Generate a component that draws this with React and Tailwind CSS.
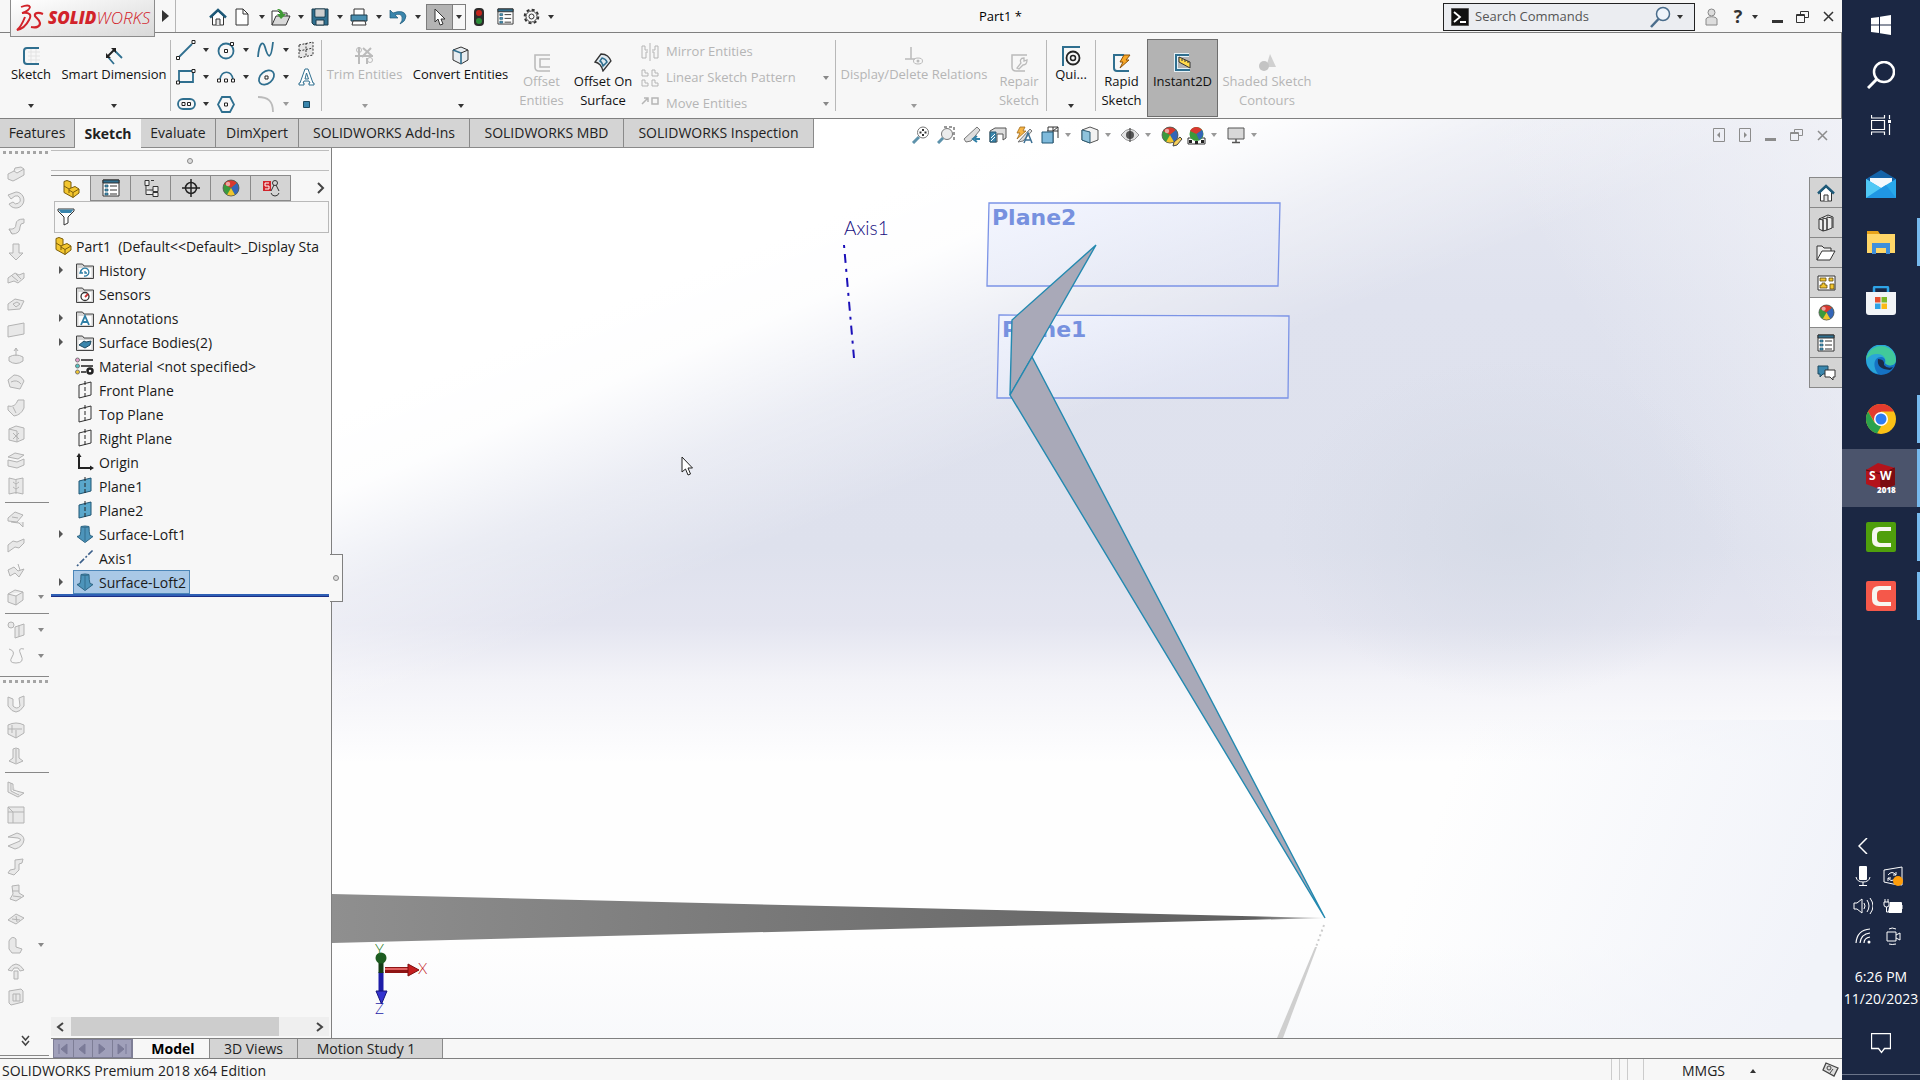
import React, { useState } from 'react';

const Svg = ({ w = 18, h, box, className = '', children }) => (
  <svg
    width={w}
    height={h || w}
    viewBox={box || `0 0 ${w} ${h || w}`}
    className={`shrink-0 ${className}`}
    fill="none"
    aria-hidden="true"
  >
    {children}
  </svg>
);

const Caret = ({ className = 'text-[#333]' }) => (
  <Svg w={6} h={4} className={className}>
    <path d="M0 0h6L3 4z" fill="currentColor" />
  </Svg>
);

const BLUE = '#2f6f8f';

const Ball = ({ size = 18 }) => (
  <Svg w={size} box="0 0 18 18">
    <circle cx="9" cy="9" r="8" fill="#3a9a3c" />
    <path d="M9 9L2 5a8 8 0 0 1 13-1z" fill="#d8382f" />
    <path d="M9 9l6-5a8 8 0 0 1-2 12z" fill="#3465b8" />
    <path d="M9 9l4 7a8 8 0 0 1-8 0z" fill="#f0c52e" />
    <circle cx="6" cy="5" r="2.2" fill="#fff" opacity=".55" />
    <circle cx="9" cy="9" r="8" stroke="#555" strokeWidth=".8" />
  </Svg>
);

const PartIcon = () => (
  <Svg w={18}>
    <path d="M2 6V1.500L5 .5l4 1.500v6l4-1.500L17 9v4l-6 4.500-9-5V6z" fill="#f3c62f" stroke="#7b5d0a" />
    <path d="M2 6l5 3v4m0-4l2-1m2 9.500v-5L17 9m-6 3.500L7 10" stroke="#7b5d0a" />
  </Svg>
);

const HomeIcon = () => (
  <Svg w={18}>
    <path d="M3.500 8v9h11V8L9 3z" fill="#fff" stroke="#333" />
    <path d="M1 9.500L9 2l8 7.500" stroke="#1e5978" strokeWidth="2.400" />
    <path d="M7 17v-6h4v6" fill="#e4e4e4" stroke="#333" />
  </Svg>
);

const PropertyIcon = ({ w = 18 }) => (
  <Svg w={w} box="0 0 18 18">
    <path d="M1 1h16v16H1z" fill="#fff" stroke="#333" />
    <path d="M1 1h16v3H1z" fill={BLUE} stroke="#333" />
    <path d="M3 6h3v2H3zM3 10h3v2H3zM3 14h3v2H3z" fill="#4a9cc0" stroke="#1d4e66" strokeWidth=".7" />
    <path d="M8 7h7M8 11h7M8 15h7" stroke="#333" />
  </Svg>
);

const RestoreIcon = ({ className }) => (
  <Svg w={13} h={12} className={className}>
    <path d="M4.500 3.500v-3h8v6h-4M.5 3.500h8v8h-8zM.5 4.500h8" stroke="currentColor" />
  </Svg>
);

const CloseIcon = ({ className }) => (
  <Svg w={11} className={className}>
    <path d="M1 1l9 9M10 1l-9 9" stroke="currentColor" strokeWidth="1.500" />
  </Svg>
);

const Logo = () => (
  <div className="z-10 ml-[10px] flex h-[37px] w-[145px] shrink-0 items-center border border-t-0 border-[#8c8c8c] bg-gradient-to-br from-white to-[#d9d9d9] pl-[5px]">
    <Svg w={28} h={28}>
      <path d="M5 3q8-3 9 0-1 4-8 6" stroke="#d2232a" strokeWidth="1.800" />
      <path d="M6 9c8-1 10 2 7 7-3 6-7 9-12 10 4-3 6-8 8-13" stroke="#d2232a" strokeWidth="2" />
      <path d="M27 10c-5-2-9-1-8 2 1 2 5 4 5 7 0 4-4 5-9 4" stroke="#d2232a" strokeWidth="2.200" />
    </Svg>
    <span className="ml-[4px] text-[17px] italic text-[#d2232a]">
      <b className="font-extrabold">SOLID</b>
      <span className="font-light">WORKS</span>
    </span>
  </div>
);

/* name, icon, whether a caret follows */
const quickTools = [
  ['New', <Svg w={16} h={18}><path d="M2 1h7l5 5v11H2z" fill="#fff" stroke="#333" /><path d="M9 1v5h5" stroke="#333" /></Svg>],
  ['Open', <Svg w={20} h={18}><path d="M1 17V3h6l2 2h7v4" fill="#fff" stroke="#333" /><path d="M1 17L5 8h14l-4 9z" fill="#d9d9d9" stroke="#333" /><path d="M6 1c4 0 6 2 6 5h3l-5 5-4-5h3c0-2-1-3-3-5z" fill="#3f9a35" /></Svg>],
  ['Save', <Svg w={18}><path d="M1 1h16v16H3l-2-2z" fill={BLUE} stroke="#1c3c4c" /><path d="M4 1h10v8H4z" fill="#fff" stroke="#1c3c4c" /><path d="M5 3h8M5 5h8M5 7h8" stroke="#777" strokeWidth=".7" /><path d="M5 12h8v5H5z" fill="#ddd" stroke="#1c3c4c" /></Svg>],
  ['Print', <Svg w={18}><path d="M4 7V1h10v6" fill="#fff" stroke="#333" /><path d="M1 7h16v6H1z" fill="#4a8fb0" stroke="#1c3c4c" /><path d="M3 13h12l1 4H2z" fill="#fff" stroke="#333" /></Svg>],
  ['Undo', <Svg w={18}><path d="M1 2v8h8L6 7q6-2 7 2 1 3-2 7 6-3 6-8Q15 1 4 5z" fill="#3a86ad" stroke="#1e5978" strokeWidth=".7" /></Svg>],
];

const TitleBar = () => (
  <header className="flex h-[33px] items-start border-b border-[#808080] bg-[#f7f7f7] text-[13px]">
    <Logo />
    <button aria-label="Show menu" className="flex h-[32px] w-[21px] items-center justify-center border-r border-[#b5b5b5]">
      <Svg w={7} h={12}><path d="M0 0l7 6-7 6z" fill="#333" /></Svg>
    </button>
    <div className="ml-[29px] flex h-[33px] items-center">
      <button aria-label="Home" className="flex h-[26px] w-[26px] items-center justify-center"><HomeIcon /></button>
      {quickTools.map(([name, icon]) => (
        <div key={name} className="flex h-[26px]">
          <button aria-label={name} className="flex w-[22px] items-center justify-center">{icon}</button>
          <button aria-label={`${name} options`} className="flex w-[17px] items-center justify-center"><Caret /></button>
        </div>
      ))}
      <div className="flex border border-[#7d7d7d]">
        <button aria-label="Select" className="flex h-[24px] w-[25px] items-center justify-center bg-[#b3b3b3]">
          <Svg w={12} h={18}><path d="M1 1v13l3-3 2 6 3-1-2-5h4z" fill="#fff" stroke="#333" /></Svg>
        </button>
        <button aria-label="Select options" className="flex w-[13px] items-center justify-center border-l border-[#7d7d7d]">
          <Caret />
        </button>
      </div>
      <button aria-label="Rebuild" className="flex w-[26px] justify-center">
        <Svg w={10} h={18}><rect width="10" height="18" rx="4" fill="#2c2c2c" /><circle cx="5" cy="5" r="3" fill="#c3241c" /><circle cx="5" cy="13" r="3" fill="#2c8c3a" /></Svg>
      </button>
      <button aria-label="File properties" className="flex w-[26px] justify-center"><PropertyIcon w={17} /></button>
      <button aria-label="Options" className="flex w-[26px] justify-center">
        <Svg w={17}>
          <circle cx="8.500" cy="8.500" r="6.800" stroke="#333" strokeWidth="2" strokeDasharray="3 2.340" />
          <circle cx="8.500" cy="8.500" r="5.500" stroke="#444" fill="#f7f7f7" />
          <circle cx="8.500" cy="8.500" r="2.500" stroke="#333" />
        </Svg>
      </button>
      <button aria-label="Options list" className="flex w-[14px] justify-center"><Caret /></button>
    </div>
    <h1 className="min-w-0 flex-1 self-center pt-[1px] text-center">Part1 *</h1>
    <div className="mt-[3px] flex h-[28px] w-[252px] shrink-0 items-center border border-[#222] bg-[#ebedf1] pl-[7px]">
      <Svg w={18}><path d="M.5.500h17v17H.5z" fill="#111" stroke="#555" /><path d="M3 4l6 5-6 5M9 14h6" stroke="#fff" strokeWidth="1.800" /></Svg>
      <input aria-label="Search Commands" placeholder="Search Commands" className="ml-[6px] w-[170px] bg-transparent outline-none placeholder:text-[#555]" />
      <Svg w={22} className="ml-[4px]"><circle cx="14" cy="8" r="6.500" fill="#eef4fb" stroke="#4a6d8c" strokeWidth="1.500" /><path d="M9.500 13L2 21" stroke="#4a6d8c" strokeWidth="2.500" /></Svg>
      <button aria-label="Search options" className="ml-[6px]"><Caret /></button>
    </div>
    <div className="flex h-[33px] shrink-0 items-center text-[#333]">
      <button aria-label="Sign in" className="ml-[9px] flex w-[14px] justify-center">
        <Svg w={13} h={18}><circle cx="6.500" cy="4.500" r="3.500" fill="#ddd" stroke="#888" /><path d="M1 17V11c1-3 10-3 11 0v6z" fill="#ddd" stroke="#888" /></Svg>
      </button>
      <button aria-label="Help" className="ml-[12px] w-[16px] text-[18px] font-bold">?</button>
      <button aria-label="Help options" className="ml-[6px] w-[8px]"><Caret /></button>
      <button aria-label="Minimize" className="ml-[12px] pt-[9px]"><span className="block h-[3px] w-[11px] bg-[#333]" /></button>
      <button aria-label="Restore" className="ml-[13px]"><RestoreIcon /></button>
      <button aria-label="Close" className="ml-[14px] mr-[8px]"><CloseIcon /></button>
    </div>
  </header>
);

const Divider = () => <div className="my-[7px] w-px shrink-0 bg-[#b8b8b8]" />;

const RibbonButton = ({ icon, lines, width, low, disabled, caret, className = '' }) => (
  <button
    disabled={disabled}
    className={`flex shrink-0 flex-col items-center leading-[19px] ${low ? 'pt-[20px]' : 'pt-[13px]'} ${width} ${disabled ? 'text-[#b5b5b5]' : 'text-[#111]'} ${className}`}
  >
    <span className="flex h-[19px] items-center">{icon}</span>
    {lines.map((l) => <span key={l} className="whitespace-nowrap">{l}</span>)}
    {caret && <span className="mt-[20px]"><Caret className={disabled ? 'text-[#999]' : 'text-[#333]'} /></span>}
  </button>
);

const node = (x, y) => <path key={`${x}-${y}`} d={`M${x} ${y}h3v3h-3z`} fill="#fff" stroke="#222" />;

const sketchTools = [
  ['Line', <Svg w={20}>{<path d="M3 17L16 4" stroke={BLUE} strokeWidth="1.800" />}{node(0.5, 16.5)}{node(16, 0.5)}</Svg>, true],
  ['Circle', <Svg w={19}><circle cx="9" cy="10" r="7.500" stroke={BLUE} strokeWidth="1.800" />{node(7.5, 8.5)}{node(13.5, 1.5)}</Svg>, true],
  ['Spline', <Svg w={18}><path d="M1 16C2 2 6-1 8 6c3 11 6 14 8-5" stroke={BLUE} strokeWidth="1.800" /></Svg>, true],
  ['Plane', <Svg w={16} h={18}><path d="M1 4l14-3v13L1 17zM8 2v14M1 10l14-3" stroke="#333" strokeDasharray="2 1.500" fill="#e6e6e6" /></Svg>, false],
  ['Rectangle', <Svg w={20} h={16}><path d="M3 2h14v11H3z" stroke={BLUE} strokeWidth="1.800" />{node(0.5, 12)}{node(16, 0.5)}</Svg>, true],
  ['Arc', <Svg w={19} h={14}><path d="M3 9C5 0 14 0 16 9" stroke={BLUE} strokeWidth="1.600" />{node(0.5, 9)}{node(7.5, 9)}{node(14.5, 9)}</Svg>, true],
  ['Ellipse', <Svg w={19}><ellipse cx="9.500" cy="9.500" rx="8.500" ry="6" transform="rotate(-40 9.500 9.500)" stroke={BLUE} strokeWidth="1.800" />{node(8, 8)}</Svg>, true],
  ['Text', <Svg w={17} h={18}><path d="M1 17h5v-2H5l1-2h5l1 2h-1v2h5v-2h-1L10 1H7L2 15H1zM7 11l1.500-6 2 6z" fill="#fff" stroke={BLUE} /></Svg>, false],
  ['Slot', <Svg w={19} h={12}><rect x="1" y="1" width="17" height="10" rx="5" stroke={BLUE} strokeWidth="1.800" />{node(5, 4.5)}{node(10.5, 4.5)}</Svg>, true],
  ['Polygon', <Svg w={18} h={17}><path d="M5 1h8l4 7.500L13 16H5L1 8.500z" stroke={BLUE} strokeWidth="1.800" />{node(7.5, 7)}</Svg>, false],
  ['Fillet', <Svg w={18}><path d="M1 2c10 0 15 4 15 15" stroke="#bbb" strokeWidth="1.800" /></Svg>, true],
  ['Point', <Svg w={7}><path d="M.5.500h6v6h-6z" fill="#3a86ad" stroke="#1e4a60" /></Svg>, false],
];

const sketchIcon = (
  <>
    <path d="M17 2H5q-3 0-3 3v10q0 3 3 3h12" stroke={BLUE} strokeWidth="2" />
    <path d="M6 6h12M6 10h12M6 14h12M9 3v14M14 3v14" stroke="#e3e3e3" />
  </>
);

const listTools = [
  ['Mirror Entities', <Svg w={18}><path d="M9 0v18M1 3v12h4V9h2M1 3h3v4h3M17 3v12h-4V9h-2M17 3h-3v4h-3" stroke="#b5b5b5" /></Svg>, false],
  ['Linear Sketch Pattern', <Svg w={18}><path d="M1 1v6h6V4H4V1zM11 1v6h6V4h-3V1zM1 11v6h6v-3H4v-3zM11 11v6h6v-3h-3v-3z" stroke="#b5b5b5" /></Svg>, true],
  ['Move Entities', <Svg w={18} h={16}><path d="M1 8l6-6M3 2h4v4M11 2h6v6h-6z" stroke="#b5b5b5" strokeWidth="1.500" /></Svg>, true],
];

const Ribbon = () => (
  <div className="flex h-[86px] overflow-hidden border-b border-r border-[#808080] bg-[#f7f7f7] pl-[4px] text-[13px]">
    <RibbonButton width="w-[54px]" lines={['Sketch']} caret icon={<Svg w={19}>{sketchIcon}</Svg>} />
    <RibbonButton
      width="w-[112px]"
      lines={['Smart Dimension']}
      caret
      icon={<Svg w={18}><path d="M9 3l8 8M3 10l6 7" stroke={BLUE} strokeWidth="1.800" /><path d="M3 9l6-6" stroke="#222" strokeWidth="2" /><path d="M1 11V6l5 5zM11 1v5L6 1z" fill="#222" /></Svg>}
    />
    <Divider />
    <div className="grid shrink-0 grid-cols-[40px_40px_40px_22px] grid-rows-3 content-center px-[4px] pt-[4px]">
      {sketchTools.map(([name, icon, caret], i) => (
        <div key={name} className="flex h-[26px] items-center">
          <button aria-label={name} className="flex w-[22px] justify-center">{icon}</button>
          {caret && <button aria-label={`${name} options`} className="flex w-[18px] justify-center"><Caret className={i === 10 ? 'text-[#999]' : 'text-[#333]'} /></button>}
        </div>
      ))}
    </div>
    <Divider />
    <RibbonButton
      width="w-[85px]" disabled caret lines={['Trim Entities']}
      icon={<Svg w={19}><path d="M4 1v17M0 10h18M8 2l9 8M16 2L7 11M12 12v6" stroke="#bbb" strokeWidth="2" /><circle cx="15" cy="14" r="2.500" stroke="#bbb" /><circle cx="4" cy="4" r="2.500" stroke="#bbb" /></Svg>}
    />
    <RibbonButton
      width="w-[107px]" caret lines={['Convert Entities']}
      icon={<Svg w={17} h={19}><path d="M1 4l8-3 7 3v10l-7 4-8-4z" fill="#e8edf1" stroke="#333" /><path d="M1 4l8 3v11" stroke={BLUE} strokeWidth="1.600" /><path d="M9 7l7-3" stroke="#333" /></Svg>}
    />
    <RibbonButton
      width="w-[55px]" low disabled lines={['Offset', 'Entities']}
      icon={<Svg w={18} h={19}><path d="M17 2H2v12q0 4 4 4h11M17 6H7v8h10" stroke="#bbb" strokeWidth="1.600" /></Svg>}
    />
    <RibbonButton
      width="w-[68px]" low lines={['Offset On', 'Surface']}
      icon={<Svg w={18} h={19}><path d="M7 1c6 0 8 3 10 7l-8 10Q7 10 1 9z" fill="#e1eaf0" stroke="#333" strokeWidth="1.300" /><path d="M8 5q4 1 5 4l-4 4Q8 9 6 8z" stroke={BLUE} strokeWidth="1.500" /></Svg>}
    />
    <div className="flex w-[198px] shrink-0 flex-col justify-center pl-[4px] pt-[4px] text-[#b5b5b5]">
      {listTools.map(([name, icon, caret]) => (
        <div key={name} className="flex h-[26px] items-center">
          <button disabled className="flex flex-1 items-center gap-[7px]">{icon}{name}</button>
          {caret && <button disabled aria-label={`${name} options`} className="mr-[6px]"><Caret className="text-[#888]" /></button>}
        </div>
      ))}
    </div>
    <Divider />
    <RibbonButton
      width="w-[156px]" disabled caret lines={['Display/Delete Relations']}
      icon={<Svg w={18} h={19}><path d="M6 1v12M0 13h10" stroke="#bbb" strokeWidth="1.500" /><ellipse cx="13" cy="15" rx="4.500" ry="3" stroke="#bbb" /><circle cx="13" cy="15" r="1.500" fill="#bbb" /></Svg>}
    />
    <RibbonButton
      width="w-[54px]" low disabled lines={['Repair', 'Sketch']}
      icon={<Svg w={18} h={19}><path d="M17 2H2v12q0 4 4 4h9" stroke="#bbb" strokeWidth="1.500" /><path d="M14 5c-4 0-4 3-3 5l-4 5 2 1 4-4c3 0 4-2 4-5l-3 1z" stroke="#bbb" strokeWidth="1.300" /></Svg>}
    />
    <Divider />
    <RibbonButton
      width="w-[48px]" caret lines={['Qui...']}
      icon={<Svg w={19} h={20}><path d="M1 20V1h17" stroke={BLUE} strokeWidth="2" /><circle cx="11" cy="12" r="6.500" stroke="#222" strokeWidth="1.800" /><circle cx="11" cy="12" r="2.500" stroke="#222" strokeWidth="1.500" /></Svg>}
    />
    <Divider />
    <RibbonButton
      width="w-[51px]" low lines={['Rapid', 'Sketch']}
      icon={<Svg w={19}><path d="M12 2H2v13q0 3 3 3h12" stroke={BLUE} strokeWidth="2" /><path d="M12 2h6l-4 5h3l-9 8 3-6H8z" fill="#f9a826" stroke="#8d5208" /></Svg>}
    />
    <RibbonButton
      width="w-[71px]" low lines={['Instant2D']}
      className="mb-[1px] mt-[6px] border border-[#6e6e6e] bg-[#b3b3b3] !pt-[13px]"
      icon={<Svg w={19}><path d="M16 2H3v15h14" stroke="#e4f1f7" strokeWidth="4" /><path d="M16 2H3v15h14" stroke={BLUE} strokeWidth="2" /><path d="M6 4l11 5v6L6 9z" fill="#ffd94a" stroke="#333" /><path d="M9 6v2M12 7v2M15 8v2" stroke="#333" /></Svg>}
    />
    <RibbonButton
      width="w-[98px]" low disabled lines={['Shaded Sketch', 'Contours']}
      icon={<Svg w={19}><path d="M12 1l6 13H8z" fill="#d0d0d0" /><circle cx="6" cy="13" r="5" fill="#c4c4c4" /></Svg>}
    />
  </div>
);

const commandTabs = [
  ['Features', 'w-[75px]'],
  ['Sketch', 'w-[66px]'],
  ['Evaluate', 'w-[75px]'],
  ['DimXpert', 'w-[83px]'],
  ['SOLIDWORKS Add-Ins', 'w-[171px]'],
  ['SOLIDWORKS MBD', 'w-[154px]'],
  ['SOLIDWORKS Inspection', 'w-[190px]'],
];

const CommandTabs = ({ active, onSelect }) => (
  <nav className="flex text-[14px] text-[#222]">
    {commandTabs.map(([name, width]) => (
      <button
        key={name}
        onClick={() => onSelect(name)}
        className={`h-[29px] shrink-0 whitespace-nowrap pb-[1px] ${width} ${
          name === active ? 'bg-[#f7f7f7] font-bold' : 'border-b border-r border-[#8a8a8a] bg-[#d4d4d4]'
        }`}
      >
        {name}
      </button>
    ))}
  </nav>
);

const viewTools = [
  ['Zoom to Fit', <Svg w={18}><circle cx="12" cy="6.500" r="5.500" fill="#fff" stroke="#777" /><path d="M12 3v7M8.500 6.500h7" stroke="#333" strokeDasharray="2 3" strokeWidth="2" /><path d="M8 11l-6 6" stroke="#5d92ab" strokeWidth="3" /></Svg>, false],
  ['Zoom to Area', <Svg w={18}><path d="M7 1h10v13" stroke="#333" strokeDasharray="3 2" /><circle cx="10" cy="8" r="5.500" fill="#ececec" stroke="#777" /><path d="M6 12l-5 5" stroke="#5d92ab" strokeWidth="3" /></Svg>, false],
  ['Previous View', <Svg w={18}><path d="M14 1l3 3-9 11-5 1-2-3z" fill="#ddd" stroke="#777" /><path d="M17 13h-5m2-3l-4 3 4 3" stroke="#2f7fa6" strokeWidth="2" /></Svg>, false],
  ['Section View', <Svg w={18}><path d="M1 5l5-3h11v10l-3 2V8H8v8H1z" fill="#ddd" stroke="#555" /><path d="M1 6h6v10H1z" fill="#3b87ad" stroke="#2c5b73" /><path d="M2 12l4-4M2 15l4-4" stroke="#fff" /></Svg>, false],
  ['Dynamic Annotation', <Svg w={18}><path d="M10 1H5L2 7h3l-3 6 9-8H8z" fill="#f6b445" stroke="#a06a1c" strokeWidth=".8" /><path d="M15 3l2 2-9 10-5 1z" fill="#ddd" stroke="#777" /><path d="M9 17l4-10 4 10M10 14h6" stroke="#3b6f93" strokeWidth="1.500" /></Svg>, false],
  ['View Orientation', <Svg w={18}><path d="M7 1h10v11M7 1v4M12 1v16M17 1l-5 4M6 5h11" stroke="#333" /><path d="M1 6h11v11H1z" fill="#7fbadb" stroke="#1f5573" /></Svg>, true],
  ['Display Style', <Svg w={18}><path d="M1 4l8-3 8 3v10l-8 3-8-3z" fill="#f2f2f2" stroke="#555" /><path d="M1 4l8 2v11l-8-3z" fill="#8fc3dc" stroke="#2c5b73" /></Svg>, true],
  ['Hide/Show Items', <Svg w={18} h={14}><path d="M0 7q9-12 18 0-9 12-18 0z" fill="#e3e3e3" stroke="#999" /><circle cx="9" cy="7" r="4" fill="#555" /><path d="M9 0v14" stroke="#333" /></Svg>, true],
  ['Edit Appearance', <span className="relative"><Ball /><Svg w={12} className="absolute -bottom-1 -right-1"><path d="M2 10l1-4 6-5 2 2-5 6z" fill="#f6cf5a" stroke="#444" /></Svg></span>, false],
  ['Apply Scene', <Svg w={19}><path d="M1 12h17v6H1z" fill="#fff" stroke="#333" /><path d="M2 14h3v3H2zM14 14h3v3h-3zM8 15h3v3H8z" fill="#222" /><circle cx="9.500" cy="8" r="7" fill="#3a9a3c" /><path d="M9.500 8L3 5a7 7 0 0 1 12-1z" fill="#d8382f" /><path d="M9.500 8L15 4a7 7 0 0 1-3 10z" fill="#3465b8" /></Svg>, true],
  ['View Settings', <Svg w={18}><path d="M1 2h16v11H1z" fill="#d8d8d8" stroke="#555" /><path d="M9 13v3M5 16.500h8" stroke="#555" strokeWidth="1.500" /></Svg>, true],
];

const ViewBar = () => (
  <div className="flex min-w-0 flex-1 items-center justify-between pt-[3px]">
    <div className="ml-[95px] flex items-center gap-[4px]">
      {viewTools.map(([name, icon, caret]) => (
        <div key={name} className="flex items-center">
          <button aria-label={name} className="flex w-[22px] justify-center">{icon}</button>
          {caret && <button aria-label={`${name} options`} className="flex w-[14px] justify-center"><Caret className="text-[#999]" /></button>}
        </div>
      ))}
    </div>
    <div className="mr-[14px] flex items-center gap-[14px] text-[#8c8c8c]">
      <button aria-label="Collapse left"><Svg w={12} h={14}><path d="M.5.500h11v13H.5z" stroke="currentColor" /><path d="M7 4v6L4 7z" fill="currentColor" /></Svg></button>
      <button aria-label="Collapse right"><Svg w={12} h={14}><path d="M.5.500h11v13H.5z" stroke="currentColor" /><path d="M5 4v6l3-3z" fill="currentColor" /></Svg></button>
      <button aria-label="Minimize document" className="pt-[8px]"><span className="block h-[3px] w-[11px] bg-[#8c8c8c]" /></button>
      <button aria-label="Restore document"><RestoreIcon /></button>
      <button aria-label="Close document"><CloseIcon /></button>
    </div>
  </div>
);

/* surface, weldment and sheet metal commands, top to bottom */
const sideGroups = [
  {
    names: ['Extruded', 'Revolved', 'Swept', 'Lofted', 'Boundary', 'Filled', 'Planar', 'Offset', 'Ruled', 'Flatten', 'Delete Face', 'Replace Face', 'Knit'],
    shapes: [
      'M1 9l6-3 3 2 7-4v6l-7 4-4 2-5-2zM7 6l1-3 6-1 3 2',
      'M9 1a8 8 0 1 1-7 12l4-2a4 4 0 1 0 2-6L4 8 1 4z',
      'M2 12q7 1 7-5 0-5 8-5v4q-4 0-4 4 0 7-8 7zM2 12l3 5',
      'M6 1h6v9h4l-7 7-7-7h4z',
      'M1 9l7-5 4 2 5-2v5l-6 5-4-2-6 2zM5 7l6 5M9 5l5 5',
      'M1 9l7-5 9 2-4 8-12 1zM6 9l4-2 3 2-4 3z',
      'M1 5l16-3v11L1 16z',
      'M2 10q7-4 14 0v4q-7 5-14 0zM9 9V1M7 4l2-3 2 3',
      'M1 7l6-5q7 0 10 6l-4 8-10-2zM4 9q6-3 10 2',
      'M11 1h6v8q-3 7-10 8l-6-6v-4q7 2 10-6zM6 8l3 6',
      'M2 4l7-3 8 2v11l-7 3-8-2zM2 4l8 2v11M6 8l6 6M12 8l-6 6',
      'M1 6l7-4 9 2-6 4zM1 9l9 2 7-3v6l-7 3-9-2z',
      'M2 1q6 3 14 0v16q-7-3-14 0zM9 2v15M6 5l3 2 3-2M6 10l3 2 3-2',
    ],
  },
  {
    names: ['Extend', 'Trim', 'Untrim', 'Thicken'],
    shapes: [
      'M1 8l7-6 8 3-6 7-9-1zM4 12l8 1 4 4v-5M5 7l6 1',
      'M1 9l5-4 4 1 7-3v4l-5 5-4-1-7 5z',
      'M1 8l6-3 4 4 6-2-5 8-4-4-5 3zM11 2l2 6',
      'M1 6l7-4 8 2v8l-7 5-8-3zM1 6l8 2 7-4M9 8v9',
    ],
    carets: [3],
  },
  {
    names: ['Reference Geometry', 'Curves'],
    shapes: ['M8 6l9-3v11l-9 3zM12 4v12M1 4a3 3 0 1 0 6 0a3 3 0 1 0-6 0', 'M2 2q7 2 3 8t4 6q9 0 5-8t3-6'],
    carets: [0, 1],
    gripAfter: true,
  },
  {
    names: ['Base Flange', 'Convert to Sheet Metal', 'Lofted Bend'],
    shapes: [
      'M1 2l5 2v7q4 4 7 0l-1-8 5-2v10q-8 12-16 0z',
      'M1 4q8-4 16 0v8l-8 5-8-4zM1 8h14M5 4v8M9 9v8',
      'M6 2q3-2 6 0v9l4 3-7 3-7-3 4-3zM9 2v14',
    ],
  },
  {
    names: ['Edge Flange', 'Miter Flange', 'Hem', 'Jog', 'Sketched Bend', 'Cross-Break', 'Corners', 'Forming Tool', 'Vent'],
    shapes: [
      'M1 2l5 2v6l11 3-6 4-10-5zM4 3v8l8 4',
      'M1 1h16v16H1zM1 6h16M6 6v11M1 1l5 5',
      'M1 5l9-4q7 2 7 7-1 7-9 9l-7-3 12-5q2-2-2-3z',
      'M8 2l8-1-1 4-3 1v6l-5 5-6-2 2-3 5-1z',
      'M5 2l7-1v8l5 3-8 5-6-2 3-5zM5 7h7M6 12l8 1',
      'M1 10l8-6 8 4-8 6zM5 9l8 1M9 6l1 6',
      'M2 5q3-6 7-2v8l6 2-2 4H5l-3-4z',
      'M1 8q8-12 16 0l-4 1-2-3H7L5 9zM7 9h4v8H7z',
      'M2 3l12-2 2 2v11l-12 3-2-2zM6 6h7v7H6zM9 6v7',
    ],
    carets: [6],
  },
];

const Grip = () => <div className="mx-[3px] h-[3px] border-b-[3px] border-dotted border-[#a5a5a5]" />;

const SideToolbar = () => (
  <aside className="flex w-[51px] shrink-0 flex-col bg-[#f7f7f7] pt-[3px]">
    <Grip />
    <div className="h-[7px]" />
    {sideGroups.map((group, g) => (
      <div key={g}>
        {group.names.map((name, i) => (
          <div key={name} className="flex h-[26px] items-center pl-[5px]">
            <button aria-label={name} className="flex w-[22px] justify-center">
              <Svg w={18}>
                <path d={group.shapes[i]} fill={name === 'Curves' ? 'none' : '#e8e8e8'} stroke="#b3b3b3" strokeLinejoin="round" />
              </Svg>
            </button>
            {group.carets?.includes(i) && (
              <button aria-label={`${name} options`} className="ml-[11px]"><Caret className="text-[#888]" /></button>
            )}
          </div>
        ))}
        {group.gripAfter ? (
          <div className="h-[22px] pt-[7px]">
            <div className="mr-[2px] border-t border-[#888]" />
            <div className="h-[3px]" />
            <Grip />
          </div>
        ) : g < 4 && <div className="flex h-[7px] items-center"><div className="ml-[5px] mr-[2px] h-px flex-1 bg-[#888]" /></div>}
      </div>
    ))}
    <div className="flex flex-1 items-end pb-[8px] pl-[20px]">
      <button aria-label="More tools"><Svg w={11} h={12}><path d="M2 1l3.500 4L9 1M2 6l3.500 4L9 6" stroke="#444" strokeWidth="1.500" /></Svg></button>
    </div>
    <div className="mr-[2px] border-t border-[#888] pb-[2px]" />
  </aside>
);

const Folder = ({ children }) => (
  <Svg w={18} h={17}>
    <path d="M.5 2h6l1.500 2h9.500v12.500H.5z" fill="#d6d6d6" stroke="#444" />
    <path d="M2.500 6h13v9h-13z" fill="#fff" />
    {children}
  </Svg>
);

const PlaneIcon = ({ solid }) => (
  <Svg w={16} h={18}>
    <path d="M2 4l12-3v13L2 17z" fill={solid ? '#5aa7cb' : 'none'} stroke={solid ? '#1f5573' : '#333'} />
    <path d="M8 0v18" stroke="#222" strokeDasharray="4 2" />
  </Svg>
);

const LoftIcon = () => (
  <Svg w={18}>
    <path d="M5 1.500q4-1 8 0 0 6 1 9l3 1-8 6-8-6 3-1q1-3 1-9z" fill="#4d94ba" stroke="#2c6483" />
    <path d="M9 3v13M5 2q4 1 8 0" stroke="#356f8f" />
  </Svg>
);

const tree = [
  { label: 'History', open: true, icon: <Folder><path d="M5 8l-1 3h3M5 11a4 4 0 1 1 3 3M9 9v2h2" stroke="#2f7fa6" strokeWidth="1.300" /></Folder> },
  { label: 'Sensors', icon: <Folder><circle cx="9" cy="10.500" r="4" stroke="#333" strokeWidth="1.300" /><path d="M9 11l3-3" stroke="#c33" strokeWidth="1.800" /></Folder> },
  { label: 'Annotations', open: true, icon: <Folder><path d="M5 15L9 6l4 9M6.500 12h5" stroke="#2f7fa6" strokeWidth="1.800" /></Folder> },
  { label: 'Surface Bodies(2)', open: true, icon: <Folder><path d="M3 11l5-4 2 1 5-1-1 4-5 3-2-1z" fill="#3a86ad" stroke="#1e4a60" /></Folder> },
  { label: 'Material <not specified>', icon: <Svg w={19} h={18}><circle cx="2.500" cy="3" r="2" fill="#e8a0d0" stroke="#777" /><circle cx="2.500" cy="9" r="2" fill="#4fc3c3" stroke="#777" /><circle cx="2.500" cy="15" r="2" fill="#f0c52e" stroke="#777" /><path d="M6 3h12M6 9h12M6 15h5" stroke="#222" strokeWidth="1.600" /><circle cx="15" cy="14" r="2.500" stroke="#222" strokeWidth="2.500" /></Svg> },
  { label: 'Front Plane', icon: <PlaneIcon /> },
  { label: 'Top Plane', icon: <PlaneIcon /> },
  { label: 'Right Plane', icon: <PlaneIcon /> },
  { label: 'Origin', icon: <Svg w={18}><path d="M3 2v13h13" stroke="#222" strokeWidth="2" /><path d="M3 0l2.500 4h-5zM18 15l-4-2.500v5z" fill="#222" /></Svg> },
  { label: 'Plane1', icon: <PlaneIcon solid /> },
  { label: 'Plane2', icon: <PlaneIcon solid /> },
  { label: 'Surface-Loft1', open: true, icon: <LoftIcon /> },
  { label: 'Axis1', icon: <Svg w={18}><path d="M1 17L17 1" stroke="#3b5f8a" strokeWidth="1.600" strokeDasharray="2 2 6 2" /></Svg> },
  { label: 'Surface-Loft2', open: true, icon: <LoftIcon /> },
];

const managerTabs = [
  ['FeatureManager', <PartIcon />],
  ['PropertyManager', <PropertyIcon />],
  ['ConfigurationManager', <Svg w={18}><path d="M3 1.500h4v5H3zM4 6.500v9h7M4.500 11H11M11 7.500h5v5h-5zM11 13.500h5v4h-5zM9 1.500h3" stroke="#333" fill="#eee" /></Svg>],
  ['DimXpertManager', <Svg w={18}><circle cx="9" cy="9" r="5.500" stroke="#222" strokeWidth="1.500" /><path d="M9 0v18M0 9h18" stroke="#222" strokeWidth="1.500" /></Svg>],
  ['DisplayManager', <Ball />],
  ['Inspection', <Svg w={18}><path d="M1 2h8v10H1z" fill="#d2232a" /><path d="M7 4H3v3h4v3H3" stroke="#fff" /><circle cx="13" cy="4" r="2.500" stroke="#333" /><path d="M12 6l-3 6M14 6l3 6M9 14q1 3 4 3t4-3" stroke="#333" /></Svg>],
];

const FeaturePanel = () => {
  const [selected, setSelected] = useState('Surface-Loft2');

  return (
    <section className="relative flex w-[281px] shrink-0 flex-col border-r border-[#808080] bg-[#f7f7f7] pr-[2px]">
      <div className="mt-[2px] flex h-[21px] items-center justify-center border-y border-[#bdbdbd]">
        <span className="h-[6px] w-[6px] rounded-full border border-[#888] bg-[#ddd]" />
      </div>
      <div className="mt-[4px] flex h-[26px]">
        {managerTabs.map(([name, icon], i) => (
          <button
            key={name}
            aria-label={name}
            className={`flex w-[40px] items-center justify-center border-t border-r border-[#8a8a8a] ${i === 0 ? '' : 'border-b bg-[#d4d4d4]'}`}
          >
            {icon}
          </button>
        ))}
        <button aria-label="More managers" className="ml-[26px]"><Svg w={8} h={12}><path d="M1 1l5 5-5 5" stroke="#444" strokeWidth="2" /></Svg></button>
      </div>
      <label className="ml-[3px] flex h-[32px] items-center border border-[#b9b9b9] pl-[2px]">
        <Svg w={18}><path d="M1 1h16v2l-6 6v6l-4 2V9L1 3z" fill="#fff" stroke="#333" /><path d="M1.500 1.500h15L14 5H4z" fill="#3a86ad" /></Svg>
        <input aria-label="Filter" className="min-w-0 flex-1 bg-transparent outline-none" />
      </label>
      <div className="mt-px flex-1 text-[14px] text-[#1a1a1a]">
        <div className="flex h-[24px] items-center gap-[4px] overflow-hidden whitespace-nowrap pl-[3px]">
          <PartIcon />
          <span>Part1&nbsp; (Default&lt;&lt;Default&gt;_Display Sta</span>
        </div>
        <ul>
          {tree.map(({ label, open, icon }) => (
            <li key={label} className="flex h-[24px] items-center pl-[8px]">
              {open
                ? <button aria-label={`Expand ${label}`} className="w-[14px]"><Svg w={4} h={8}><path d="M0 0l4 4-4 4z" fill="#555" /></Svg></button>
                : <span className="w-[14px]" />}
              <button
                onClick={() => setSelected(label)}
                className={`flex h-[24px] items-center gap-[5px] whitespace-nowrap border pl-px pr-[3px] ${selected === label ? 'border-[#4c86b8] bg-[#a9c8e6]' : 'border-transparent'}`}
              >
                <span className="flex w-[19px] justify-center">{icon}</span>
                {label}
              </button>
            </li>
          ))}
        </ul>
        <div className="h-[3px] border-b border-[#1c2f86] bg-[#2f5fb5]" />
      </div>
      <div className="mb-[2px] flex h-[19px] items-center bg-[#efefef] px-[5px]">
        <button aria-label="Scroll left"><Svg w={8} h={10}><path d="M7 1L2 5l5 4" stroke="#444" strokeWidth="2" /></Svg></button>
        <div className="ml-[7px] h-[19px] w-[208px] bg-[#cdcdcd]" />
        <button aria-label="Scroll right" className="ml-auto"><Svg w={8} h={10}><path d="M1 1l5 4-5 4" stroke="#444" strokeWidth="2" /></Svg></button>
      </div>
      <button
        aria-label="Collapse panel"
        className="absolute -right-[12px] top-[406px] flex h-[48px] w-[13px] items-center justify-center border border-l-0 border-[#808080] bg-[#f7f7f7]"
      >
        <span className="h-[6px] w-[6px] rounded-full border border-[#888] bg-[#ddd]" />
      </button>
    </section>
  );
};

/* model space; the scene sits at window coordinates, shifted up by the header height */
const Scene = () => (
  <svg className="absolute inset-0 h-full w-full" aria-label="Model view">
    <defs>
      <linearGradient id="sky" gradientUnits="userSpaceOnUse" x1="0" y1="0" x2="0" y2="919">
        <stop offset="0" stopColor="#e6e8f1" />
        <stop offset=".2" stopColor="#dfe2ee" />
        <stop offset=".47" stopColor="#dee1ed" />
        <stop offset=".55" stopColor="#e4e5f0" />
        <stop offset=".61" stopColor="#f3f3f8" />
        <stop offset=".7" stopColor="#fefefe" />
        <stop offset=".9" stopColor="#fefefe" />
        <stop offset="1" stopColor="#f8f9fb" />
      </linearGradient>
      <linearGradient id="glow" gradientUnits="userSpaceOnUse" x1="650" y1="170" x2="755" y2="430">
        <stop offset="0" stopColor="#fff" />
        <stop offset=".25" stopColor="#fff" stopOpacity=".95" />
        <stop offset=".6" stopColor="#fff" stopOpacity=".4" />
        <stop offset="1" stopColor="#fff" stopOpacity="0" />
      </linearGradient>
      <linearGradient id="corner" gradientUnits="userSpaceOnUse" x1="1420" y1="740" x2="1800" y2="880">
        <stop offset="0" stopColor="#f1f3f9" stopOpacity="0" />
        <stop offset="1" stopColor="#f1f3f9" />
      </linearGradient>
      <linearGradient id="edge" gradientUnits="userSpaceOnUse" x1="1560" y1="160" x2="1842" y2="0">
        <stop offset="0" stopColor="#f2f3f8" stopOpacity="0" />
        <stop offset="1" stopColor="#f2f3f8" stopOpacity=".8" />
      </linearGradient>
      <radialGradient id="shade">
        <stop offset="0" stopColor="#d4d9e5" stopOpacity=".8" />
        <stop offset="1" stopColor="#d4d9e5" stopOpacity="0" />
      </radialGradient>
      <linearGradient id="blade" x1="0" x2="1" y1="0" y2="0">
        <stop offset="0" stopColor="#8f8f8f" />
        <stop offset=".75" stopColor="#696969" />
        <stop offset=".93" stopColor="#5f5f5f" />
        <stop offset="1" stopColor="#d0d0d0" />
      </linearGradient>
      <linearGradient id="face" x1="0" x2="1" y1="0" y2="1">
        <stop offset="0" stopColor="#f1f4ff" stopOpacity=".9" />
        <stop offset="1" stopColor="#dfe3f2" stopOpacity=".5" />
      </linearGradient>
    </defs>
    <rect width="100%" height="100%" fill="url(#sky)" />
    <rect width="100%" height="100%" fill="url(#glow)" />
    <rect width="100%" height="55%" fill="url(#edge)" />
    <rect y="64%" width="100%" height="36%" fill="url(#corner)" />
    <ellipse cx="1510" cy="410" rx="230" ry="170" fill="url(#shade)" />
    <g transform="translate(0 -119)">
      <path d="M989 203h291l-2 83H987z" fill="url(#face)" stroke="#7b93e6" strokeWidth="1.300" />
      <path d="M999 315l290 1-1 82H997z" fill="url(#face)" stroke="#7b93e6" strokeWidth="1.300" />
      <g fill="#7791df" fontFamily="DejaVu Sans, sans-serif" fontWeight="700" fontSize="22">
        <text x="992" y="225">Plane2</text>
        <text x="1002" y="337">Plane1</text>
      </g>
      <path d="M1096 245l-84 75-2 75 22-38z" fill="#a9a9b8" stroke="#2389b0" strokeWidth="1.400" />
      <path d="M1010 395l22-38 293 561z" fill="#a9a9b8" stroke="#2389b0" strokeWidth="1.400" />
      <path d="M332 894l993 24-993 25z" fill="url(#blade)" />
      <path d="M1324 925l-8 22" stroke="#ccc" strokeWidth="2" strokeDasharray="2 3" />
      <path d="M1315 947l2 0-34 91h-6z" fill="#cfcfcf" />
      <text x="844" y="235" fill="#140c80" fontFamily="Lato, sans-serif" fontWeight="300" fontSize="19">Axis1</text>
      <path d="M844 245l10 113" stroke="#1b10b8" strokeWidth="2" strokeDasharray="3 6 9 6" />
      <g fontFamily="Lato, sans-serif" fontWeight="300" fontSize="15">
        <path d="M381 972v20" stroke="#1d1da8" strokeWidth="5" />
        <path d="M376 991h11l-5.500 13z" fill="#3434d0" stroke="#15157a" />
        <path d="M381 958v15" stroke="#143c16" strokeWidth="5" />
        <circle cx="381" cy="958" r="5.500" fill="#1d5c20" />
        <path d="M385 970h24" stroke="#8e1414" strokeWidth="6" />
        <path d="M385 969h24" stroke="#e06060" strokeWidth="2" />
        <path d="M408 964l11 6-11 6z" fill="#c41f1f" stroke="#7d1010" />
        <text x="375" y="955" fill="#1d7a20">Y</text>
        <text x="418" y="974" fill="#c41f1f">X</text>
        <text x="375" y="1014" fill="#1d1da8">Z</text>
      </g>
      <path d="M682 457v15l3.500-3 2.500 6 2.500-1-2.500-6h4.500z" fill="#fff" stroke="#222" />
    </g>
  </svg>
);

const taskPane = [
  ['Resources', <HomeIcon />],
  ['Design Library', <Svg w={18}><path d="M2 5l4 1v11l-4-2zM6 4l4 1v11l-4 1zM10 3l5 1v10l-5 2zM2 5l9-4 5 2v11" stroke="#333" fill="#eee" /></Svg>],
  ['File Explorer', <Svg w={20} h={17}><path d="M1 16V2h5l2 2h7v3" stroke="#333" fill="#eee" /><path d="M1 16L6 7h13l-5 9z" stroke="#333" fill="#fff" /></Svg>],
  ['View Palette', <Svg w={19} h={16}><path d="M1 1h17v14H1z" fill="#fff" stroke="#333" /><path d="M3 3h6v3H3zM12 3h4v3h-4zM5 8h3v2h2v3H3v-3h2zM13 9h4v5h-4z" fill="#f3c62f" stroke="#5d4a10" strokeWidth=".8" /></Svg>],
  ['Appearances', <Ball size={17} />],
  ['Custom Properties', <PropertyIcon />],
  ['Forum', <Svg w={19} h={16}><path d="M1 1h10v8H6l-3 3V9H1z" fill="#3a86ad" stroke="#1e4a60" /><path d="M8 5h10v7h-2v3l-3-3H8z" fill="#fff" stroke="#333" /></Svg>],
];

const TaskPane = () => {
  const [open, setOpen] = useState('Appearances');

  return (
    <div className="z-10 mt-[29px] flex flex-col self-start border-l border-t border-[#888]">
      {taskPane.map(([name, icon]) => (
        <button
          key={name}
          aria-label={name}
          onClick={() => setOpen(name)}
          className={`flex h-[30px] w-[32px] items-center justify-center border-b border-[#888] ${open === name ? 'bg-white' : 'bg-[#d4d4d4]'}`}
        >
          {icon}
        </button>
      ))}
    </div>
  );
};

const playShapes = ['M3 2v10M11 2v10L5 7z', 'M9 2v10L3 7z', 'M4 2v10l6-5z', 'M3 2v10l6-5zM11 2v10'];

const MotionTabs = () => (
  <div className="z-10 flex h-[20px] border-t border-[#808080] bg-[#f7f7f7] text-[14px] text-[#222]">
    <div className="ml-[2px] flex w-[80px] border border-[#7e7e96] bg-[#a0a0ba]">
      {playShapes.map((d, i) => (
        <button key={d} aria-label={['First tab', 'Previous tab', 'Next tab', 'Last tab'][i]} className="flex flex-1 items-center justify-center border-r border-[#7e7e96]">
          <Svg w={14}><path d={d} fill="#7b7b98" stroke="#7b7b98" /></Svg>
        </button>
      ))}
    </div>
    <button className="w-[76px] pl-[4px] font-bold leading-[19px] text-black">Model</button>
    <button className="w-[89px] border-x border-[#8a8a8a] bg-[#d4d4d4] leading-[19px]">3D Views</button>
    <button className="w-[145px] border-r border-[#8a8a8a] bg-[#d4d4d4] pr-[8px] leading-[19px]">Motion Study 1</button>
  </div>
);

const StatusBar = () => (
  <footer className="flex h-[22px] items-center border-t border-[#808080] bg-[#f7f7f7] text-[14px] text-[#222]">
    <span className="flex-1 pl-[2px] pt-[2px]">SOLIDWORKS Premium 2018 x64 Edition</span>
    <div className="flex h-full gap-[7px]">
      <span className="w-px bg-[#ccc]" />
      <span className="w-px bg-[#ccc]" />
      <span className="w-px bg-[#ccc]" />
      <span className="ml-[8px] w-px bg-[#ccc]" />
    </div>
    <button className="ml-[38px] flex items-center pt-[2px] text-[14px]">
      MMGS
      <Svg w={6} h={4} className="ml-[25px]"><path d="M0 4h6L3 0z" fill="#333" /></Svg>
    </button>
    <button aria-label="Tags" className="ml-[66px] mr-[3px]">
      <Svg w={17} h={15}><path d="M4 1l12 5-4 8L1 8z" fill="#ddd" stroke="#444" strokeWidth="1.300" /><circle cx="7" cy="6" r="2" stroke="#444" /><path d="M11 7l-3 4" stroke="#444" /></Svg>
    </button>
  </footer>
);

const camtasia = (color) => (
  <Svg w={30}>
    <rect width="30" height="30" rx="2" fill={color} />
    <path d="M25 5H13q-7 0-7 7v6q0 7 7 7h12v-4l-10 0q-4 0-4-4v-4q0-4 4-4l10 0z" fill="#f6f6f0" />
  </Svg>
);

/* name, icon, cell size, running, focused */
const apps = [
  ['Start', <Svg w={20}><path d="M0 3l8-1v7.500H0zM9 1.800L20 0v9.500H9zM0 10.500h8V18l-8-1zM9 10.500h11V20L9 18.200z" fill="#fff" /></Svg>, 'h-[50px]'],
  ['Search', <Svg w={28}><circle cx="17" cy="11" r="10" stroke="#fff" strokeWidth="2.500" /><path d="M10 18l-9 9" stroke="#fff" strokeWidth="3" /></Svg>, 'h-[50px]'],
  ['Task View', <Svg w={20}><path d="M.5 0v3h13V0M.5 5.500h13v9H.5zM.5 20v-3h13v3M18.500 0v4M18.500 9v11" stroke="#fff" strokeWidth="1.200" /><path d="M17 5h3v3h-3z" fill="#fff" /></Svg>, 'h-[50px]'],
  ['Mail', <Svg w={30} h={28}><path d="M0 9L15 0l15 9v10H0z" fill="#1463a8" /><path d="M4 8h22v12H4z" fill="#f4f8fc" /><path d="M0 9l15 9 15-9v19H0z" fill="#28a8ea" /><path d="M0 28l15-10L0 9z" fill="#50c8f5" /><path d="M0 28l20-13 10 13z" fill="#1d8fdf" opacity=".7" /></Svg>, 'h-[68px]'],
  ['File Explorer', <Svg w={28} h={24}><path d="M0 1h11l2 3h-13z" fill="#e8a31a" /><path d="M0 4h28v19H0z" fill="#ffd668" /><path d="M5 13h18v11h-4v-6H9v6H5z" fill="#3f8fdc" /></Svg>, 'h-[48px]', true],
  ['Store', <Svg w={30} h={30}><path d="M8 7V2q0-1 1-1h12q1 0 1 1v5" stroke="#2ea3e6" strokeWidth="2.500" /><path d="M0 6h30v20q0 3-3 3H3q-3 0-3-3z" fill="#f2f4f7" /><path d="M9 11h5.500v5.500H9z" fill="#e8502f" /><path d="M15.500 11H21v5.500h-5.500z" fill="#7cb928" /><path d="M9 17.500h5.500V23H9z" fill="#2ea3e6" /><path d="M15.500 17.500H21V23h-5.500z" fill="#fbb914" /></Svg>, 'h-[70px]'],
  ['Edge', <Svg w={30}><circle cx="15" cy="15" r="15" fill="#1572c4" /><path d="M0 14a15 15 0 0 1 30 1c0 6-8 7-11 3 1-2 0-6-4-6-7 0-9 9-3 17A15 15 0 0 1 0 14z" fill="#2aa6d8" /><path d="M3 7a15 15 0 0 1 27 8c0 6-8 7-11 3 2-4-2-10-9-9-4 0-8 3-10 6a15 15 0 0 1 3-8z" fill="#45cf8f" opacity=".85" /><path d="M12 14q-2 10 12 11 2-1 3-3-6 2-9-2 1-6-6-6z" fill="#1b2a47" /></Svg>, 'h-[48px]'],
  ['Chrome', <Svg w={30}><circle cx="15" cy="15" r="15" fill="#fbc116" /><path d="M2 7.500a15 15 0 0 1 26 0H15l-6 11z" fill="#e33b2e" /><path d="M2 7.500l6.500 11 6.500 4-4 7A15 15 0 0 1 2 7.500z" fill="#2ba24c" /><circle cx="15" cy="15" r="7" fill="#fff" /><circle cx="15" cy="15" r="5.500" fill="#2e7cf0" /></Svg>, 'mt-[11px] h-[48px]', true],
  ['SOLIDWORKS 2018', <Svg w={30} h={32}><path d="M0 8L12 1l17 5v17l-13 5L0 22z" fill="#b3131b" /><path d="M0 8l15 4 14-6M15 12v16" stroke="#5e080c" /><path d="M15 12l14-6v17l-14 5z" fill="#7b0d12" /><text x="3" y="18" fill="#fff" fontSize="12" fontWeight="700">S</text><text x="14" y="18" fill="#fff" fontSize="12" fontWeight="700">W</text><text x="11" y="31" fill="#fff" fontSize="8" fontWeight="800">2018</text></Svg>, 'my-[6px] h-[58px]', true, true],
  ['Camtasia', camtasia('#4f9f0c'), 'h-[48px]', true],
  ['Recorder', camtasia('#f5584a'), 'mt-[11px] h-[48px]', true],
];

const tray = [
  ['Microphone', <Svg w={16} h={20}><rect x="4" width="8" height="14" rx="1" fill="#fff" /><path d="M1 11q1 5 7 5t7-5M8 16v3M4 19.500h8" stroke="#fff" /></Svg>],
  ['Update', <Svg w={21} h={20}><path d="M1 4l18-3v18l-9-1-9-2z" stroke="#fff" /><path d="M5 9q4-5 8 0M13 6v3h-3M5 12v3M5 12h3M5 12q3 4 6 2" stroke="#fff" /><circle cx="15" cy="15" r="5" fill="#ff9d0a" /></Svg>],
  ['Volume', <Svg w={20} h={18}><path d="M1 6h3l5-4v14l-5-4H1zM11 6q2 3 0 6M14 3q4 6 0 12M17 1q6 8 0 16" stroke="#fff" /></Svg>],
  ['Battery', <Svg w={20} h={15}><path d="M1 3h5v3q0 2-2.500 2T1 6zM2 0v3M5 0v3M3.500 8v5H6" stroke="#fff" /><path d="M7 4h11v9H5z" fill="#fff" /><path d="M7 3.500h11.500v10H6M19 6v4" stroke="#fff" /></Svg>],
  ['Network', <Svg w={16} h={16}><path d="M1 15Q2 2 15 1M5 15q1-9 10-10M9 15q0-5 6-6" stroke="#fff" strokeWidth="1.200" /><circle cx="14" cy="14" r="1.500" fill="#fff" /></Svg>],
  ['Meet Now', <Svg w={15} h={18}><path d="M1 5h9v9H1zM10 8l4-2v7l-4-2M3 2q3-2 7 0M3 17q3 1 7 0" stroke="#fff" /></Svg>],
];

const Taskbar = () => (
  <aside className="flex w-[78px] shrink-0 flex-col bg-[#1b2743] text-white">
    {apps.map(([name, icon, size, running, focused]) => (
      <button
        key={name}
        aria-label={name}
        className={`flex shrink-0 items-center justify-center ${size} ${focused ? 'bg-[#4b546c]' : ''} ${running ? 'border-r-[3px] border-[#76b9ed] pl-[3px]' : ''}`}
      >
        {icon}
      </button>
    ))}
    <div className="flex-1" />
    <div className="ml-[6px] w-[60px]">
      <button aria-label="Show hidden icons" className="ml-[10px] block"><Svg w={10} h={16}><path d="M9 0L1 8l8 8" stroke="#fff" strokeWidth="1.500" /></Svg></button>
      <div className="mt-[7px] grid grid-cols-2">
        {tray.map(([name, icon]) => (
          <button key={name} aria-label={name} className="flex h-[30px] w-[30px] items-center justify-center">{icon}</button>
        ))}
      </div>
    </div>
    <button className="mt-[15px] w-full whitespace-nowrap text-center text-[14px] leading-[22px]">
      <span className="block">6:26 PM</span>
      <span className="block">11/20/2023</span>
    </button>
    <button aria-label="Notifications" className="mt-[23px] flex justify-center">
      <Svg w={20} h={21}><path d="M.5.500h19v15h-6l-3 4-3-4h-7z" stroke="#fff" strokeWidth="1.300" /></Svg>
    </button>
    <div className="mt-[20px] h-[6px] border-t border-[#6b7489]" />
  </aside>
);

export default function App() {
  const [tab, setTab] = useState('Sketch');

  return (
    <div className="flex min-h-screen font-['Open_Sans',sans-serif]">
      <div className="flex min-w-0 flex-1 flex-col overflow-hidden">
        <TitleBar />
        <Ribbon />
        <main className="relative flex flex-1 flex-col">
          <Scene />
          <div className="relative z-10 flex">
            <CommandTabs active={tab} onSelect={setTab} />
            <ViewBar />
          </div>
          <div className="relative flex flex-1">
            <SideToolbar />
            <div className="flex min-w-0 flex-1 flex-col">
              <div className="flex flex-1 justify-between">
                <FeaturePanel />
                <TaskPane />
              </div>
              <MotionTabs />
            </div>
          </div>
        </main>
        <StatusBar />
      </div>
      <Taskbar />
    </div>
  );
}
